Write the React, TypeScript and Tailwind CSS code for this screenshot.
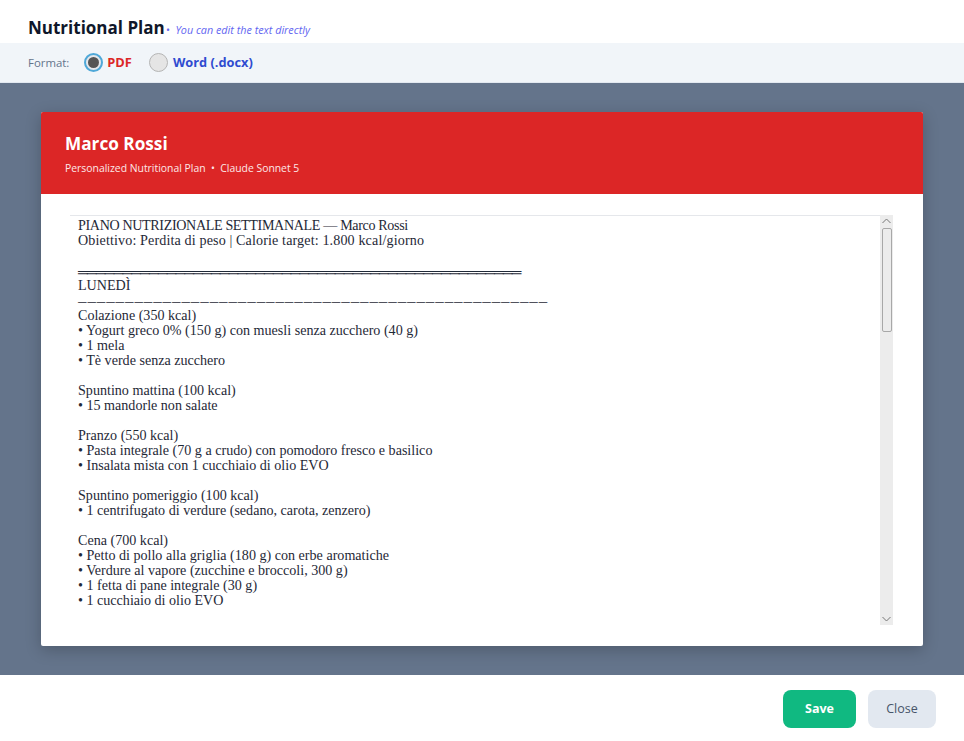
const LINES = [
  "Colazione (350 kcal)",
  "• Yogurt greco 0% (150 g) con muesli senza zucchero (40 g)",
  "• 1 mela",
  "• Tè verde senza zucchero",
  "",
  "Spuntino mattina (100 kcal)",
  "• 15 mandorle non salate",
  "",
  "Pranzo (550 kcal)",
  "• Pasta integrale (70 g a crudo) con pomodoro fresco e basilico",
  "• Insalata mista con 1 cucchiaio di olio EVO",
  "",
  "Spuntino pomeriggio (100 kcal)",
  "• 1 centrifugato di verdure (sedano, carota, zenzero)",
  "",
  "Cena (700 kcal)",
  "• Petto di pollo alla griglia (180 g) con erbe aromatiche",
  "• Verdure al vapore (zucchine e broccoli, 300 g)",
  "• 1 fetta di pane integrale (30 g)",
  "• 1 cucchiaio di olio EVO",
]

export default function App() {
  return (
    <div className="flex h-[741px] flex-col bg-white font-['Open_Sans',sans-serif]">
      <div className="flex h-[43px] items-end pb-[2px] pl-[28px]">
        <h1 className="text-[17px] leading-[26px] font-bold text-[#0f172a]">Nutritional Plan</h1>
        <span className="mb-[3px] ml-[1px] text-[10.8px] text-[#6366f1] italic">•&nbsp; You can edit the text directly</span>
      </div>

      <div className="flex h-[40px] items-center border-b border-[#e2e8f0] bg-[#f1f5f9] pl-[28px]">
        <span className="mt-[1px] text-[11.4px] text-[#64748b]">Format:</span>
        <label className="ml-[15px] flex items-center gap-[4px]">
          <span className="flex size-[19px] items-center justify-center rounded-full border-2 border-[#4fa8d8] bg-[#e5e7eb]">
            <span className="size-[11px] rounded-full bg-[#555]" />
          </span>
          <span className="mt-[1px] text-[12.8px] font-bold text-[#dc2626]">PDF</span>
        </label>
        <label className="ml-[17px] flex items-center gap-[5px]">
          <span className="size-[19px] rounded-full border border-[#b5b5b5] bg-[#e5e5e5]" />
          <span className="mt-[1px] text-[12.8px] font-bold text-[#2f4bd0]">Word (.docx)</span>
        </label>
      </div>

      <main className="flex min-h-0 flex-1 flex-col bg-[#64748b] px-[41px] pt-[29px] pb-[29px]">
        <div className="flex min-h-0 flex-1 flex-col overflow-hidden rounded-[2px] bg-white shadow-[0_4px_16px_rgba(0,0,0,0.22)]">
          <header className="h-[82px] bg-[#dc2626] pt-[20px] pl-[24px] text-white">
            <h2 className="text-[17.2px] leading-[24px] font-bold">Marco Rossi</h2>
            <p className="mt-[4px] text-[10.4px] leading-[16px] text-[#fde8e8]">
              Personalized Nutritional Plan&nbsp;&nbsp;•&nbsp;&nbsp;Claude Sonnet 5
            </p>
          </header>

          <div className="flex min-h-0 flex-1 pt-[21px] pr-[30px] pb-[21px] pl-[29px]">
            <div className="min-w-0 flex-1 overflow-hidden border-t border-[#e5e7eb] pt-[2px] pl-[8px] font-['Liberation_Serif',serif] text-[14.1px] leading-[15px] whitespace-pre text-[#1f2937]">
              <div className="h-[15px] tracking-[-0.36px]">PIANO NUTRIZIONALE SETTIMANALE — Marco Rossi</div>
              <div className="h-[15px] tracking-[0.13px]">Obiettivo: Perdita di peso | Calorie target: 1.800 kcal/giorno</div>
              <div className="h-[15px]" />
              <div className="h-[15px] pt-[4px] text-[14px] leading-[11px] tracking-[-1.07px]">══════════════════════════════════════════════════</div>
              <div className="h-[15px]">LUNEDÌ</div>
              <div className="h-[15px] pt-[4px] text-[12px] leading-[11px] tracking-[0.9px]">──────────────────────────────────────────────────</div>
              {LINES.map((line, i) => (
                <div key={i} className="h-[15px]">{line}</div>
              ))}
              <div className="h-[14.5px]" />
              <div className="h-[15px]">Totale dieta: 1.800 kcal</div>
            </div>

            <div className="flex w-[13px] flex-col items-center bg-[#ececec]">
              <svg width="13" height="13" viewBox="0 0 13 13" fill="none" stroke="#777" strokeWidth="1">
                <path d="M2.5 8 6.5 4l4 4" />
              </svg>
              <div className="h-[104px] w-[10px] rounded-[2px] border border-[#a8a8a8] bg-[#ececec]" />
              <div className="flex-1" />
              <svg width="13" height="13" viewBox="0 0 13 13" fill="none" stroke="#777" strokeWidth="1">
                <path d="M2.5 5l4 4 4-4" />
              </svg>
            </div>
          </div>
        </div>
      </main>

      <footer className="flex h-[66px] items-start justify-end gap-[12px] pt-[15px] pr-[28px]">
        <button className="h-[38px] w-[73px] rounded-[8px] bg-[#10b981] text-[12.5px] font-bold text-white">Save</button>
        <button className="h-[38px] w-[68px] rounded-[8px] bg-[#e2e8f0] text-[12.5px] text-[#475569]">Close</button>
      </footer>
    </div>
  )
}
